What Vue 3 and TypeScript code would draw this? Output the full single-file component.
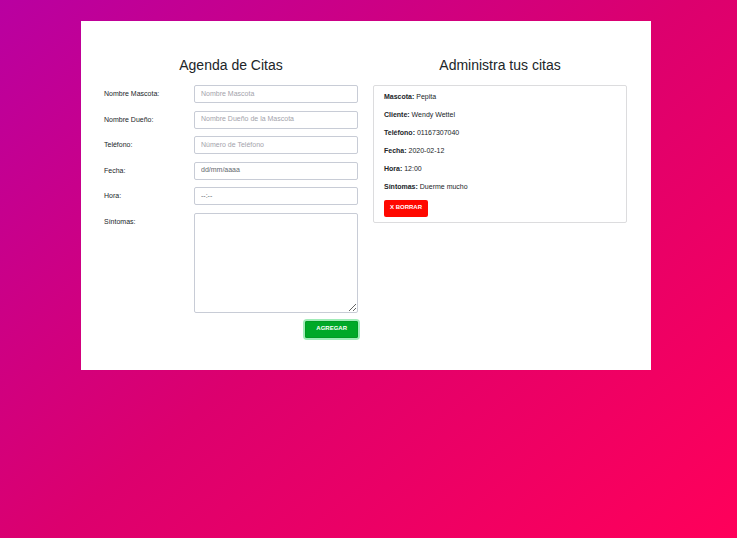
<script setup lang="ts">
import { ref } from 'vue'

interface Campo {
  id: string
  etiqueta: string
  marcador: string
  oscuro?: boolean
}

interface Cita {
  id: number
  mascota: string
  cliente: string
  telefono: string
  fecha: string
  hora: string
  sintomas: string
}

const campos: Campo[] = [
  { id: 'mascota', etiqueta: 'Nombre Mascota:', marcador: 'Nombre Mascota' },
  { id: 'dueno', etiqueta: 'Nombre Dueño:', marcador: 'Nombre Dueño de la Mascota' },
  { id: 'telefono', etiqueta: 'Teléfono:', marcador: 'Número de Teléfono' },
  { id: 'fecha', etiqueta: 'Fecha:', marcador: 'dd/mm/aaaa', oscuro: true },
  { id: 'hora', etiqueta: 'Hora:', marcador: '--:--', oscuro: true },
]

const vacio = (): Record<string, string> => ({
  mascota: '', dueno: '', telefono: '', fecha: '', hora: '', sintomas: '',
})

const nueva = ref(vacio())
const citas = ref<Cita[]>([
  {
    id: 1,
    mascota: 'Pepita',
    cliente: 'Wendy Wettel',
    telefono: '01167307040',
    fecha: '2020-02-12',
    hora: '12:00',
    sintomas: 'Duerme mucho',
  },
])

function agregar() {
  const n = nueva.value
  if (!n.mascota) return
  citas.value.push({
    id: Date.now(),
    mascota: n.mascota,
    cliente: n.dueno,
    telefono: n.telefono,
    fecha: n.fecha,
    hora: n.hora,
    sintomas: n.sintomas,
  })
  nueva.value = vacio()
}

function borrar(id: number) {
  citas.value = citas.value.filter((c) => c.id !== id)
}
</script>

<template>
  <div class="pagina">
    <main class="panel">
      <section>
        <h2>Agenda de Citas</h2>
        <form @submit.prevent="agregar">
          <div class="campos">
            <div v-for="c in campos" :key="c.id" class="fila">
              <label :for="c.id">{{ c.etiqueta }}</label>
              <input
                :id="c.id"
                v-model="nueva[c.id]"
                type="text"
                :class="['control', { oscuro: c.oscuro }]"
                :placeholder="c.marcador"
              />
            </div>
          </div>
          <div class="fila">
            <label for="sintomas">Síntomas:</label>
            <textarea id="sintomas" v-model="nueva.sintomas" class="control area"></textarea>
          </div>
          <div class="acciones">
            <button type="submit" class="boton agregar">Agregar</button>
          </div>
        </form>
      </section>
      <section>
        <h2>Administra tus citas</h2>
        <ul class="citas">
          <li v-for="c in citas" :key="c.id" class="cita">
            <p><b>Mascota:</b> {{ c.mascota }}</p>
            <p><b>Cliente:</b> {{ c.cliente }}</p>
            <p><b>Teléfono:</b> {{ c.telefono }}</p>
            <p><b>Fecha:</b> {{ c.fecha }}</p>
            <p><b>Hora:</b> {{ c.hora }}</p>
            <p><b>Síntomas:</b> {{ c.sintomas }}</p>
            <button type="button" class="boton borrar" @click="borrar(c.id)">X Borrar</button>
          </li>
        </ul>
      </section>
    </main>
  </div>
</template>

<style>
body {
  margin: 0;
}
</style>

<style scoped>
.pagina,
.pagina * {
  box-sizing: border-box;
}
.pagina {
  min-height: 100vh;
  padding: 21px 86px 21px 81px;
  background: linear-gradient(140deg, #b900a1 0%, #dc006e 50%, #ff005a 100%);
  font-family: "Liberation Sans", Arial, sans-serif;
  font-size: 7px;
  line-height: 10px;
  color: #212529;
}
.panel {
  display: grid;
  grid-template-columns: 1fr 1fr;
  gap: 15px;
  padding: 36px 24px 32px 23px;
  background: #fff;
}
h2 {
  margin: 0 0 12px;
  font-size: 14px;
  line-height: 16px;
  font-weight: 400;
  text-align: center;
}
form {
  display: flex;
  flex-direction: column;
  gap: 8px;
}
.campos {
  display: flex;
  flex-direction: column;
  justify-content: space-between;
  height: 120px;
}
.fila {
  display: grid;
  grid-template-columns: 90px 1fr;
  align-items: start;
}
.fila label {
  padding-top: 4px;
}
.control {
  display: block;
  width: 100%;
  height: 18px;
  margin: 0;
  padding: 2px 6px 4px;
  border: 1px solid #c8ccd6;
  border-radius: 2px;
  background: #fff;
  color: #495057;
  font: inherit;
  outline: none;
}
.control::placeholder {
  color: #a3a3ab;
  opacity: 1;
}
.control.oscuro::placeholder {
  color: #63686d;
}
.area {
  height: 100px;
  resize: both;
}
.acciones {
  display: flex;
  justify-content: flex-end;
}
.boton {
  height: 17px;
  margin: 0;
  padding: 0 6px 3px;
  border: 0;
  border-radius: 2px;
  color: #fff;
  font-family: inherit;
  font-size: 6px;
  line-height: 12px;
  font-weight: 700;
  text-transform: uppercase;
  cursor: pointer;
}
.agregar {
  padding: 0 11px 3px;
  background: #00a928;
  box-shadow: 0 0 0 2px #a0ecb8, inset 0 0 0 1px #009c24;
}
.borrar {
  background: #ff0800;
}
.citas {
  display: flex;
  flex-direction: column;
  gap: 8px;
  margin: 0;
  padding: 0;
  list-style: none;
}
.cita {
  padding: 6px 10px 5px;
  border: 1px solid #dcdcde;
  border-radius: 2px;
}
.cita p {
  margin: 0 0 8px;
}
.cita .boton {
  display: block;
}
</style>
